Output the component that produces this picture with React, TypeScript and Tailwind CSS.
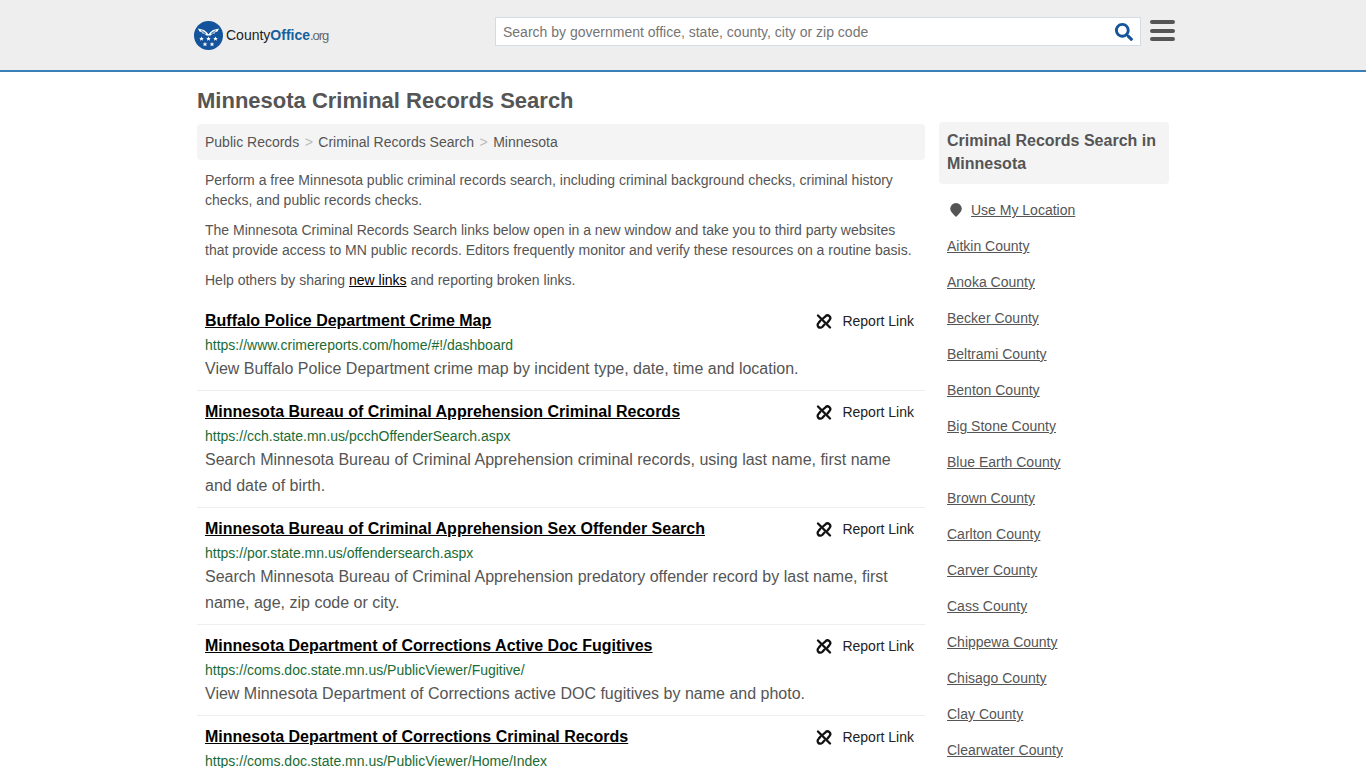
import { FaSearch } from "react-icons/fa";

const results = [
  {
    title: "Buffalo Police Department Crime Map",
    url: "https://www.crimereports.com/home/#!/dashboard",
    desc: "View Buffalo Police Department crime map by incident type, date, time and location.",
  },
  {
    title: "Minnesota Bureau of Criminal Apprehension Criminal Records",
    url: "https://cch.state.mn.us/pcchOffenderSearch.aspx",
    desc: "Search Minnesota Bureau of Criminal Apprehension criminal records, using last name, first name and date of birth.",
  },
  {
    title: "Minnesota Bureau of Criminal Apprehension Sex Offender Search",
    url: "https://por.state.mn.us/offendersearch.aspx",
    desc: "Search Minnesota Bureau of Criminal Apprehension predatory offender record by last name, first name, age, zip code or city.",
  },
  {
    title: "Minnesota Department of Corrections Active Doc Fugitives",
    url: "https://coms.doc.state.mn.us/PublicViewer/Fugitive/",
    desc: "View Minnesota Department of Corrections active DOC fugitives by name and photo.",
  },
  {
    title: "Minnesota Department of Corrections Criminal Records",
    url: "https://coms.doc.state.mn.us/PublicViewer/Home/Index",
    desc: "",
  },
];

const counties = [
  "Aitkin County",
  "Anoka County",
  "Becker County",
  "Beltrami County",
  "Benton County",
  "Big Stone County",
  "Blue Earth County",
  "Brown County",
  "Carlton County",
  "Carver County",
  "Cass County",
  "Chippewa County",
  "Chisago County",
  "Clay County",
  "Clearwater County",
];

const star = "l.7 1.5 1.6.1-1.2 1 .4 1.6-1.5-.9-1.5.9.4-1.6-1.2-1 1.6-.1z";

const Logo = () => (
  <svg viewBox="0 0 29 29" className="w-[29px] h-[29px] shrink-0">
    <circle cx="14.500" cy="14.500" r="14.500" fill="#14549c" />
    {/* wings */}
    <path d="M4 7.500l6 1.500 3 2.500 1.500 2 1.500-2 3-2.500 6-1.500-1.500 3-2 .5-1 1.500-2 .5-2 1.500h-4l-2-1.500-2-.5-1-1.500-2-.5z" fill="#fff" />
    <path d="M7 9.500l4.500 2.500M8.500 11.500l3.500 1.500M22 9.500l-4.500 2.500M20.500 11.500l-3.500 1.500" stroke="#14549c" strokeWidth="0.7" />
    <g fill="#fff">
      <path d={`M7.500 15.500${star}`} />
      <path d={`M14.500 15.500${star}`} />
      <path d={`M21.500 15.500${star}`} />
      <path d={`M11 21${star}`} />
      <path d={`M18 21${star}`} />
    </g>
  </svg>
);

const BrokenLink = () => (
  <svg viewBox="0 0 16 15" className="w-[16px] h-[15px] translate-x-[1px]" fill="none" stroke="#111" strokeWidth="2.300" strokeLinecap="round" strokeLinejoin="round">
    <path d="M2 1.500l12 12" />
    <path d="M7 4.500l2.500-2.200a2.700 2.700 0 0 1 4 3.700l-2 2.500" />
    <path d="M4.500 6.500l-2 2.500a2.700 2.700 0 0 0 3.700 4l2.300-2.500" />
  </svg>
);

export default function App() {
  return (
    <div className="font-['Liberation_Sans',Arial,sans-serif] bg-white h-[768px] overflow-hidden text-[#555]">
      {/* Header */}
      <header className="h-[72px] bg-[#eee] border-b-2 border-[#3a7fb5]">
        <div className="w-[972px] mx-auto flex items-start">
          <a className="flex items-center mt-[21px] -ml-[3px] w-[301px] shrink-0">
            <Logo />
            <span className="ml-[3px] text-[14px] text-[#222] whitespace-nowrap">
              County<span className="text-[#14609f] font-bold">Office</span>
              <span className="text-[13px] tracking-[-1.1px] text-[#666]">.org</span>
            </span>
          </a>
          <div className="mt-[17px] w-[646px] shrink-0 h-[29px] bg-white border border-[#d4dbe3] flex items-center pl-[7px] pr-[7px]">
            <span className="text-[14px] text-[#757575] flex-1 pt-[1px]">Search by government office, state, county, city or zip code</span>
            <FaSearch className="w-[18px] h-[18px] text-[#14549c] mt-[1px]" />
          </div>
          <div className="ml-[9px] mt-[20px] flex flex-col gap-[4.500px]">
            <div className="w-[25px] h-[4px] rounded-sm bg-[#555]" />
            <div className="w-[25px] h-[4px] rounded-sm bg-[#555]" />
            <div className="w-[25px] h-[4px] rounded-sm bg-[#555]" />
          </div>
        </div>
      </header>

      <div className="w-[972px] mx-auto">
        <h1 className="mt-[16px] text-[22px] leading-[26px] font-bold text-[#555]">Minnesota Criminal Records Search</h1>
        <div className="flex mt-[8px]">
          <main className="w-[728px] shrink-0">
            <nav className="mt-[2px] h-[36px] bg-[#f4f4f4] rounded flex items-center px-[8px] text-[14px] text-[#555]">
              <a>Public Records</a>
              <span className="mx-[5.500px] text-[#bbb]">&gt;</span>
              <a>Criminal Records Search</a>
              <span className="mx-[5.500px] text-[#bbb]">&gt;</span>
              <a>Minnesota</a>
            </nav>
            <div className="px-[8px] text-[14px] leading-[20px] mt-[10px]">
              <p>Perform a free Minnesota public criminal records search, including criminal background checks, criminal history checks, and public records checks.</p>
              <p className="mt-[10px]">The Minnesota Criminal Records Search links below open in a new window and take you to third party websites that provide access to MN public records. Editors frequently monitor and verify these resources on a routine basis.</p>
              <p className="mt-[10px]">Help others by sharing <a className="underline text-black">new links</a> and reporting broken links.</p>
            </div>
            <div className="mt-[10px]">
              {results.map((r) => (
                <div key={r.title} className="border-b border-[#eee] px-[8px] pt-[11px] pb-[8px]">
                  <div className="flex items-start justify-between">
                    <a className="text-[16px] leading-[20px] font-bold underline text-black">{r.title}</a>
                    <span className="flex items-center text-[14px] leading-[20px] text-[#222] mr-[3px]">
                      <BrokenLink />
                      <span className="ml-[11px]">Report Link</span>
                    </span>
                  </div>
                  <div className="text-[14px] leading-[20px] text-[#1a6b34] mt-[4px]">{r.url}</div>
                  {r.desc && <p className="text-[16px] leading-[26px] mt-[1px]">{r.desc}</p>}
                </div>
              ))}
            </div>
          </main>
          <aside className="ml-[14px] w-[230px] shrink-0">
            <div className="bg-[#f4f4f4] rounded px-[8px] pt-[7px] pb-[9px] text-[16px] leading-[23px] font-bold text-[#555]">
              Criminal Records Search in Minnesota
            </div>
            <div className="px-[8px] text-[14px] leading-[20px] mt-[16px]">
              <a className="flex items-center h-[20px] mb-[16px]">
                <svg viewBox="0 0 12 14" className="w-[12px] h-[14px] ml-[3px] mr-[9px]">
                  <path d="M6 0a5.800 5.800 0 0 1 5.800 5.800C11.800 9 6 14 6 14S.2 9 .2 5.800A5.800 5.800 0 0 1 6 0z" fill="#555" />
                </svg>
                <span className="underline">Use My Location</span>
              </a>
              {counties.map((c) => (
                <a key={c} className="block underline h-[20px] mb-[16px]">{c}</a>
              ))}
            </div>
          </aside>
        </div>
      </div>
    </div>
  );
}
